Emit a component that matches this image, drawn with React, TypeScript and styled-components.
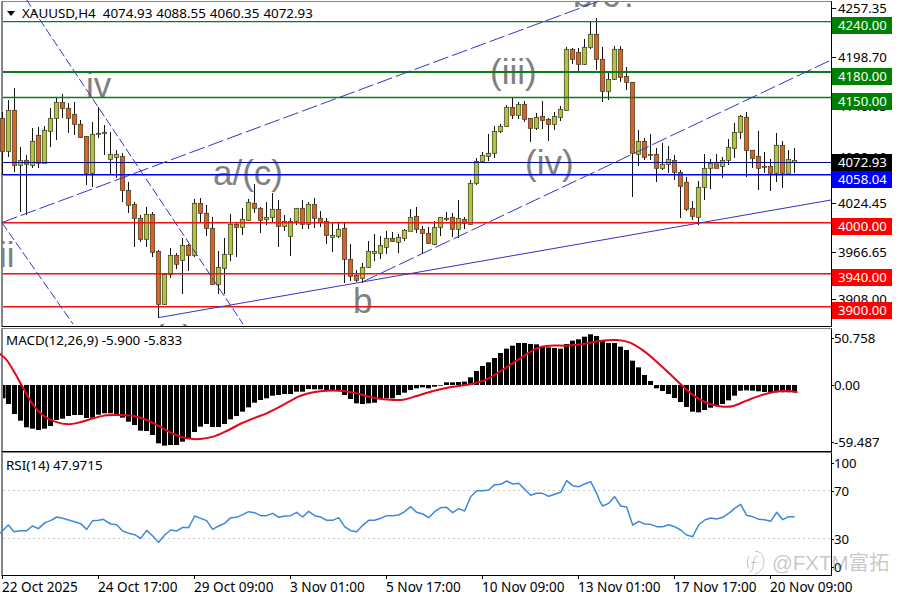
import React from "react";
import styled, { createGlobalStyle } from "styled-components";

const GlobalStyle = createGlobalStyle`
  html, body { margin: 0; padding: 0; background: #fff; }
  #root { width: 900px; height: 600px; overflow: hidden; }
`;

const FONT = `"Noto Sans", "Liberation Sans", Arial, sans-serif`;

const Page = styled.div`
  position: relative;
  width: 900px;
  height: 600px;
  padding-top: 1px;
  box-sizing: border-box;
  background: #fff;
  font-family: ${FONT};
  font-size: 13.6px;
  color: #000;
  display: flex;
  flex-direction: column;
`;

const Pane = styled.section<{ $h: number; $gap?: number }>`
  display: flex;
  flex: none;
  height: ${(p) => p.$h}px;
  margin-top: ${(p) => p.$gap ?? 0}px;
  padding-left: 1px;
`;

const Frame = styled.div`
  position: relative;
  flex: none;
  width: 828px;
  border-top: 1px solid #858585;
  border-left: 2px solid #858585;
  border-right: 1px solid #000;
  border-bottom: 1px solid #000;
`;

const Plot = styled.svg`
  display: block;
  overflow: visible;
`;

const Legend = styled.div<{ $top?: number }>`
  position: absolute;
  left: 3px;
  top: ${(p) => p.$top ?? 2}px;
  line-height: 18px;
  white-space: pre;
  display: flex;
  align-items: center;
  gap: 4px;
  font-size: 13.4px;
`;

const SymbolName = styled.span`
  margin-right: 3px;
`;

const Caret = styled.i`
  width: 0;
  height: 0;
  margin: 0 3px 0 1px;
  border-left: 4.5px solid transparent;
  border-right: 4.5px solid transparent;
  border-top: 5px solid #000;
`;

const Scale = styled.div`
  position: relative;
  flex: 1;
  overflow: hidden;
  font-size: 13.2px;
`;

const ScaleLabel = styled.span<{ $y: number; $x: number }>`
  position: absolute;
  left: ${(p) => p.$x}px;
  top: ${(p) => p.$y - 9}px;
  line-height: 18px;
  white-space: nowrap;
  &::before {
    content: "";
    position: absolute;
    left: ${(p) => -p.$x}px;
    top: 9px;
    width: ${(p) => (p.$x > 4 ? 4 : 2)}px;
    height: 1px;
    background: #000;
  }
`;

const PriceTag = styled.span<{ $y: number; $bg: string }>`
  position: absolute;
  left: 0;
  top: ${(p) => p.$y}px;
  width: 60px;
  height: 17px;
  line-height: 17px;
  padding-left: 6px;
  box-sizing: border-box;
  color: #fff;
  background: ${(p) => p.$bg};
`;

const TimeAxis = styled.div`
  display: flex;
  flex: none;
  height: 24px;
  padding-left: 2px;
`;

const TimeCell = styled.div`
  position: relative;
  flex: none;
  width: 96px;
  white-space: nowrap;
  line-height: 22px;
  &::before {
    content: "";
    position: absolute;
    left: 0;
    top: 0;
    width: 1px;
    height: 3px;
    background: #000;
  }
`;

const WaveLabel = styled.text`
  font-family: "Liberation Sans", Arial, sans-serif;
  font-size: 35px;
  fill: #808080;
`;

const Watermark = styled.div`
  position: absolute;
  left: 746px;
  top: 550px;
  display: flex;
  align-items: center;
  gap: 7px;
  font-family: "Liberation Sans", "Noto Sans CJK SC", sans-serif;
  font-size: 20.5px;
  line-height: 26px;
  color: rgba(120, 120, 120, 0.42);
`;

type Candle = [number, number, number, number, 0 | 1];

const CANDLES: Candle[] = [
  [112,118,151,175,0],[100,110,151,157,1],[88,110,165,172,0],[147,160,165,212,1],[155,160,164,215,0],
  [128,141,165,168,1],[127,135,163,168,0],[126,130,163,163,1],[108,118,131,147,1],[98,102,118,140,1],
  [94,102,108,118,0],[103,108,118,133,0],[102,114,124,135,0],[120,124,137,138,0],[136,136,173,185,0],
  [122,134,173,187,1],[107,133,134,138,1],[125,132,133,155,1],[132,154,159,175,1],[150,154,157,178,1],
  [153,156,190,202,0],[182,190,205,213,0],[202,204,218,247,0],[215,218,239,242,0],[207,214,239,247,1],
  [212,214,252,257,0],[250,251,304,318,0],[273,274,304,305,1],[248,255,274,278,1],[253,255,264,269,0],
  [238,245,260,294,1],[244,245,255,271,0],[199,203,255,257,1],[198,203,213,222,0],[205,213,228,236,0],
  [217,228,284,285,0],[251,267,284,294,1],[238,254,268,294,1],[214,224,254,261,1],[222,224,227,257,0],
  [208,219,227,235,1],[199,202,220,221,1],[184,203,208,213,0],[207,208,220,233,0],[202,217,219,225,1],
  [193,209,217,222,1],[200,209,226,247,0],[215,221,226,231,1],[218,221,236,256,1],[208,208,221,225,1],
  [200,208,224,229,0],[202,204,224,229,1],[198,204,218,228,0],[211,218,222,227,0],[218,221,235,244,0],
  [222,235,237,252,1],[222,229,236,238,1],[222,228,259,283,0],[244,259,276,281,0],[270,275,280,282,0],
  [263,267,278,283,1],[241,251,267,268,1],[234,251,253,261,1],[236,245,253,259,1],[231,238,247,254,1],
  [232,238,241,242,0],[234,237,242,253,1],[229,230,238,241,1],[209,217,231,231,1],[207,216,229,233,0],
  [226,229,233,253,0],[227,233,243,244,0],[221,227,244,245,1],[217,217,227,236,1],[212,218,218,221,1],
  [213,217,229,237,0],[200,218,229,238,1],[217,219,223,229,0],[180,183,224,225,1],[158,161,183,185,1],
  [152,155,161,163,1],[134,153,156,161,1],[126,131,153,158,1],[124,126,131,133,1],[105,107,126,127,1],
  [98,107,115,119,0],[102,104,115,119,1],[101,104,119,122,0],[118,118,128,142,0],[113,117,128,130,1],
  [101,116,120,129,0],[118,119,124,141,0],[112,116,124,130,1],[106,109,117,121,1],[47,49,110,111,1],
  [48,49,59,64,0],[48,52,64,73,0],[39,47,64,65,1],[22,34,47,49,1],[18,34,59,70,0],
  [47,59,91,102,0],[73,79,91,100,1],[46,49,79,80,1],[46,49,77,82,0],[67,76,82,90,0],
  [82,82,153,197,0],[130,141,154,166,1],[138,141,157,160,0],[134,154,155,160,1],[148,154,168,182,0],
  [143,164,168,170,1],[146,159,164,173,1],[155,160,172,180,0],[170,172,186,218,0],[177,182,209,211,0],
  [201,208,216,220,0],[181,187,217,225,1],[154,168,187,200,1],[159,163,168,189,1],[154,162,168,168,0],
  [157,160,166,178,1],[139,147,160,165,1],[123,132,148,158,1],[115,116,132,139,1],[112,117,150,177,0],
  [150,150,158,168,0],[131,156,168,190,0],[152,166,167,173,1],[159,166,173,191,0],[133,145,173,182,1],
  [141,145,173,188,0],[150,159,173,173,1],[148,160,162,173,1],
];

const HIST_Z = [
  205,222,252,272,292,296,300,296,288,270,266,258,255,255,264,263,254,250,250,255,263,275,285,302,303,
  315,340,347,345,345,335,325,306,290,282,291,291,282,268,258,245,232,218,210,205,197,195,192,192,185,
  185,177,178,178,180,180,180,195,207,220,222,220,218,205,205,205,195,188,180,175,172,175,170,167,
  157,157,156,155,142,123,108,97,84,69,56,47,39,39,42,43,50,52,54,56,42,32,28,20,13,18,
  33,39,39,50,60,92,112,135,153,175,183,192,204,216,231,245,247,240,233,225,222,211,197,182,181,182,184,186,187,187,187,187,187,
];

const SIGNAL_A = [[0,72],[20,90],[45,130],[70,175],[100,225],[130,257],[165,275],[205,283],[240,277],[280,265],[320,256],[360,255],[400,258],[440,270],[480,290],[520,312],[560,325],[600,327],[640,320],[680,303],[720,282],[760,265],[800,250],[840,230],[880,208]];
const SIGNAL_B = [[0,198],[40,187],[80,182],[130,183],[170,190],[220,203],[270,209],[310,209],[350,198],[400,183],[450,172],[510,163],[560,148],[610,118],[660,85],[710,55],[750,47],[800,47],[850,42]];
const SIGNAL_C = [[0,33],[50,30],[90,38],[130,62],[170,95],[210,132],[250,170],[290,203],[330,222],[370,230],[400,228],[440,212],[480,197],[520,186],[560,182],[590,186]];

const RSI_A = [[0,250],[10,240],[25,225],[42,245],[60,242],[80,242],[97,228],[115,236],[135,218],[152,212],[170,201],[188,205],[206,210],[224,215],[242,221],[260,238],[278,212],[296,211],[310,208],[332,222],[350,224],[368,243],[386,250],[404,254],[422,265],[440,241],[458,258],[476,277],[494,255],[512,240],[530,243],[548,232],[566,233],[584,198],[602,205],[620,212],[638,238],[656,228],[674,220],[692,203],[710,202],[728,194],[746,185],[764,188],[782,197],[800,197],[818,190],[836,202],[854,198],[872,197],[890,187]];
const RSI_B = [[0,195],[8,201],[26,184],[44,197],[62,201],[80,211],[98,211],[116,203],[134,230],[152,242],[170,245],[188,226],[206,211],[224,211],[242,205],[260,197],[278,197],[296,195],[314,185],[332,170],[350,187],[368,192],[386,203],[404,185],[422,173],[440,172],[458,188],[476,176],[494,183],[512,140],[530,122],[548,122],[566,120],[584,104],[602,103],[620,93],[638,102],[656,100],[674,118],[692,136],[710,130],[728,130],[746,139],[764,133],[782,127],[800,92],[818,107],[836,110],[854,102],[872,95],[890,130]];
const RSI_C = [[0,155],[8,168],[26,160],[44,140],[62,168],[80,171],[98,225],[116,214],[134,222],[152,223],[170,230],[188,230],[206,224],[224,230],[242,240],[260,255],[278,260],[296,225],[314,210],[332,204],[350,207],[368,202],[386,190],[404,175],[422,163],[440,196],[458,200],[476,208],[494,209],[512,214],[530,187],[548,209],[566,200],[584,200]];

const toPage = (set: number[][], x0: number, y0: number) =>
  set.map(([x, y]) => [x0 + x / 3, y0 + y / 3]);

const smooth = (p: number[][]) => {
  let d = `M${p[0][0]} ${p[0][1]}`;
  for (let i = 0; i < p.length - 1; i++) {
    const a = p[Math.max(0, i - 1)], b = p[i], c = p[i + 1], e = p[Math.min(p.length - 1, i + 2)];
    d += `C${b[0] + (c[0] - a[0]) / 6} ${b[1] + (c[1] - a[1]) / 6} ${c[0] - (e[0] - b[0]) / 6} ${c[1] - (e[1] - b[1]) / 6} ${c[0]} ${c[1]}`;
  }
  return d;
};

const SIGNAL = [...toPage(SIGNAL_A, 0, 330), ...toPage(SIGNAL_B, 300, 330), ...toPage(SIGNAL_C, 600, 330)];
const RSI = [...toPage(RSI_A, 0, 450), ...toPage(RSI_B, 300, 450), ...toPage(RSI_C, 600, 450)];

const cx = (i: number) => 2.5 + 6 * i;

const LEVELS = [
  { y: 21.6, w: 1.4, c: "#0f7a18" },
  { y: 72, w: 2, c: "#0f7a18" },
  { y: 97.5, w: 1.4, c: "#0f7a18" },
  { y: 162.5, w: 1.2, c: "#00008c" },
  { y: 174.7, w: 1.6, c: "#0000f0" },
  { y: 222.7, w: 1.5, c: "#f01010" },
  { y: 273.7, w: 1.5, c: "#f01010" },
  { y: 306.7, w: 1.5, c: "#f01010" },
];

const TRENDS = [
  { x1: 2, y1: 222.5, x2: 602, y2: 0, dash: "16 4" },
  { x1: 363, y1: 281.7, x2: 829, y2: 61, dash: "16 4" },
  { x1: 26, y1: -1, x2: 243, y2: 324, dash: "9 3" },
  { x1: 2, y1: 222.7, x2: 73, y2: 324, dash: "9 3" },
  { x1: 158, y1: 317.7, x2: 831, y2: 200 },
];

const WAVES = [
  { x: 86, y: 97, t: "iv" },
  { x: 213, y: 185, t: "a/(c)" },
  { x: 490, y: 84, t: "(iii)" },
  { x: 525, y: 175, t: "(iv)" },
  { x: 353, y: 313, t: "b" },
  { x: -1, y: 267, t: "ii" },
  { x: 573, y: 7, t: "b/c?" },
  { x: 153, y: 350, t: "(v)" },
];

const MAIN_LABELS: [number, string][] = [
  [8, "4257.35"], [57, "4198.70"], [106, "4140.05"], [157, "4082.10"],
  [203, "4024.45"], [252, "3966.65"], [299, "3908.00"],
];
const TAGS: [number, string, string][] = [
  [17, "4240.00", "#008000"], [68, "4180.00", "#008000"], [93, "4150.00", "#008000"],
  [154, "4072.93", "#000"], [171, "4058.04", "#0000ff"],
  [218, "4000.00", "#ff0000"], [269, "3940.00", "#ff0000"], [302, "3900.00", "#ff0000"],
];
const MACD_LABELS: [number, string][] = [[338, "50.758"], [385, "0.00"], [442, "-59.487"]];
const RSI_LABELS: [number, string][] = [[463, "100"], [491, "70"], [539, "30"], [567, "0"]];
const TIMES = ["22 Oct 2025", "24 Oct 17:00", "29 Oct 09:00", "3 Nov 01:00", "5 Nov 17:00", "10 Nov 09:00", "13 Nov 01:00", "17 Nov 17:00", "20 Nov 09:00"];

const CANDLE_FILL = { 0: "#d8622a", 1: "#b2c33e" };

const MainChart = () => (
  <Plot width={828} height={324} viewBox="3 2 828 324">
    <defs>
      <clipPath id="main-clip">
        <rect x={-2} y={2} width={833} height={324} />
      </clipPath>
    </defs>
    <g clipPath="url(#main-clip)">
      {WAVES.map((w) => (
        <WaveLabel key={w.t} x={w.x} y={w.y}>{w.t}</WaveLabel>
      ))}
    </g>
    {CANDLES.map(([hi, top, bot, lo, c], i) => (
      <g key={i}>
        <line x1={cx(i)} x2={cx(i)} y1={hi} y2={lo} stroke="#111" />
        <rect x={cx(i) - 2.2} y={top + 0.3} width={4.4} height={Math.max(bot - top, 1)} fill={CANDLE_FILL[c]} stroke="#3a3a1a" strokeWidth={0.7} />
      </g>
    ))}
    {LEVELS.map((l) => (
      <line key={l.y} x1={3} x2={831} y1={l.y} y2={l.y} stroke={l.c} strokeWidth={l.w} />
    ))}
    {TRENDS.map((t) => (
      <line key={t.x1 + "-" + t.y1} x1={t.x1} y1={t.y1} x2={t.x2} y2={t.y2} stroke="#3434c4" strokeWidth={1} strokeDasharray={t.dash} />
    ))}
  </Plot>
);

const MacdChart = () => (
  <Plot width={828} height={122} viewBox="3 329 828 122">
    {HIST_Z.map((z, i) => {
      const y = 330 + z / 3;
      return (
        <rect key={i} x={Math.max(3, cx(i) - 2.5)} y={Math.min(y, 385)} width={i === 0 ? 2.5 : 5} height={Math.abs(y - 385)} fill="#000" />
      );
    })}
    <path d={smooth(SIGNAL)} fill="none" stroke="#e2061c" strokeWidth={2} strokeLinecap="round" />
  </Plot>
);

const RsiChart = () => (
  <Plot width={828} height={122} viewBox="3 453 828 122">
    <line x1={3} x2={831} y1={490.5} y2={490.5} stroke="#c8c8c8" strokeDasharray="2 3" />
    <line x1={3} x2={831} y1={538.5} y2={538.5} stroke="#c8c8c8" strokeDasharray="2 3" />
    <polyline points={RSI.map((p) => p.join(",")).join(" ")} fill="none" stroke="#3c88dc" strokeWidth={1.5} strokeLinejoin="round" />
  </Plot>
);

const SwirlLogo = () => (
  <svg width={19} height={26} viewBox="0 0 19 26" fill="none" stroke="rgba(120,120,120,0.45)" strokeWidth={1}>
    <path d="M9 1.5C14.5 1 18 5.5 18 11.5C18 17.5 14.5 22.5 8.5 24" />
    <path d="M3 6C1.4 9.5 0.6 14 2.6 18.5" />
    <path d="M12 6C9 6 8 8.5 7.6 12L6.4 19C6 21 5 22 3.4 22" />
    <path d="M5 12.5H10.5" />
  </svg>
);

export default function App() {
  return (
    <Page>
      <GlobalStyle />
      <Pane $h={326}>
        <Frame>
          <MainChart />
          <Legend>
            <Caret />
            <SymbolName>XAUUSD,H4</SymbolName>
            <span>4074.93</span>
            <span>4088.55</span>
            <span>4060.35</span>
            <span>4072.93</span>
          </Legend>
        </Frame>
        <Scale>
          {MAIN_LABELS.map(([y, t]) => (
            <ScaleLabel key={t} $x={6} $y={y - 1}>{t}</ScaleLabel>
          ))}
          {TAGS.map(([y, t, bg]) => (
            <PriceTag key={t} $y={y - 1} $bg={bg}>{t}</PriceTag>
          ))}
        </Scale>
      </Pane>
      <Pane $h={124} $gap={1}>
        <Frame>
          <MacdChart />
          <Legend>MACD(12,26,9) -5.900 -5.833</Legend>
        </Frame>
        <Scale>
          {MACD_LABELS.map(([y, t]) => (
            <ScaleLabel key={t} $x={2} $y={y - 328}>{t}</ScaleLabel>
          ))}
        </Scale>
      </Pane>
      <Pane $h={124}>
        <Frame>
          <RsiChart />
          <Legend $top={3}>RSI(14) 47.9715</Legend>
        </Frame>
        <Scale>
          {RSI_LABELS.map(([y, t]) => (
            <ScaleLabel key={t} $x={2} $y={y - 452}>{t}</ScaleLabel>
          ))}
        </Scale>
      </Pane>
      <TimeAxis>
        {TIMES.map((t) => (
          <TimeCell key={t}>{t}</TimeCell>
        ))}
      </TimeAxis>
      <Watermark>
        <SwirlLogo />
        <span>@FXTM富拓</span>
      </Watermark>
    </Page>
  );
}
